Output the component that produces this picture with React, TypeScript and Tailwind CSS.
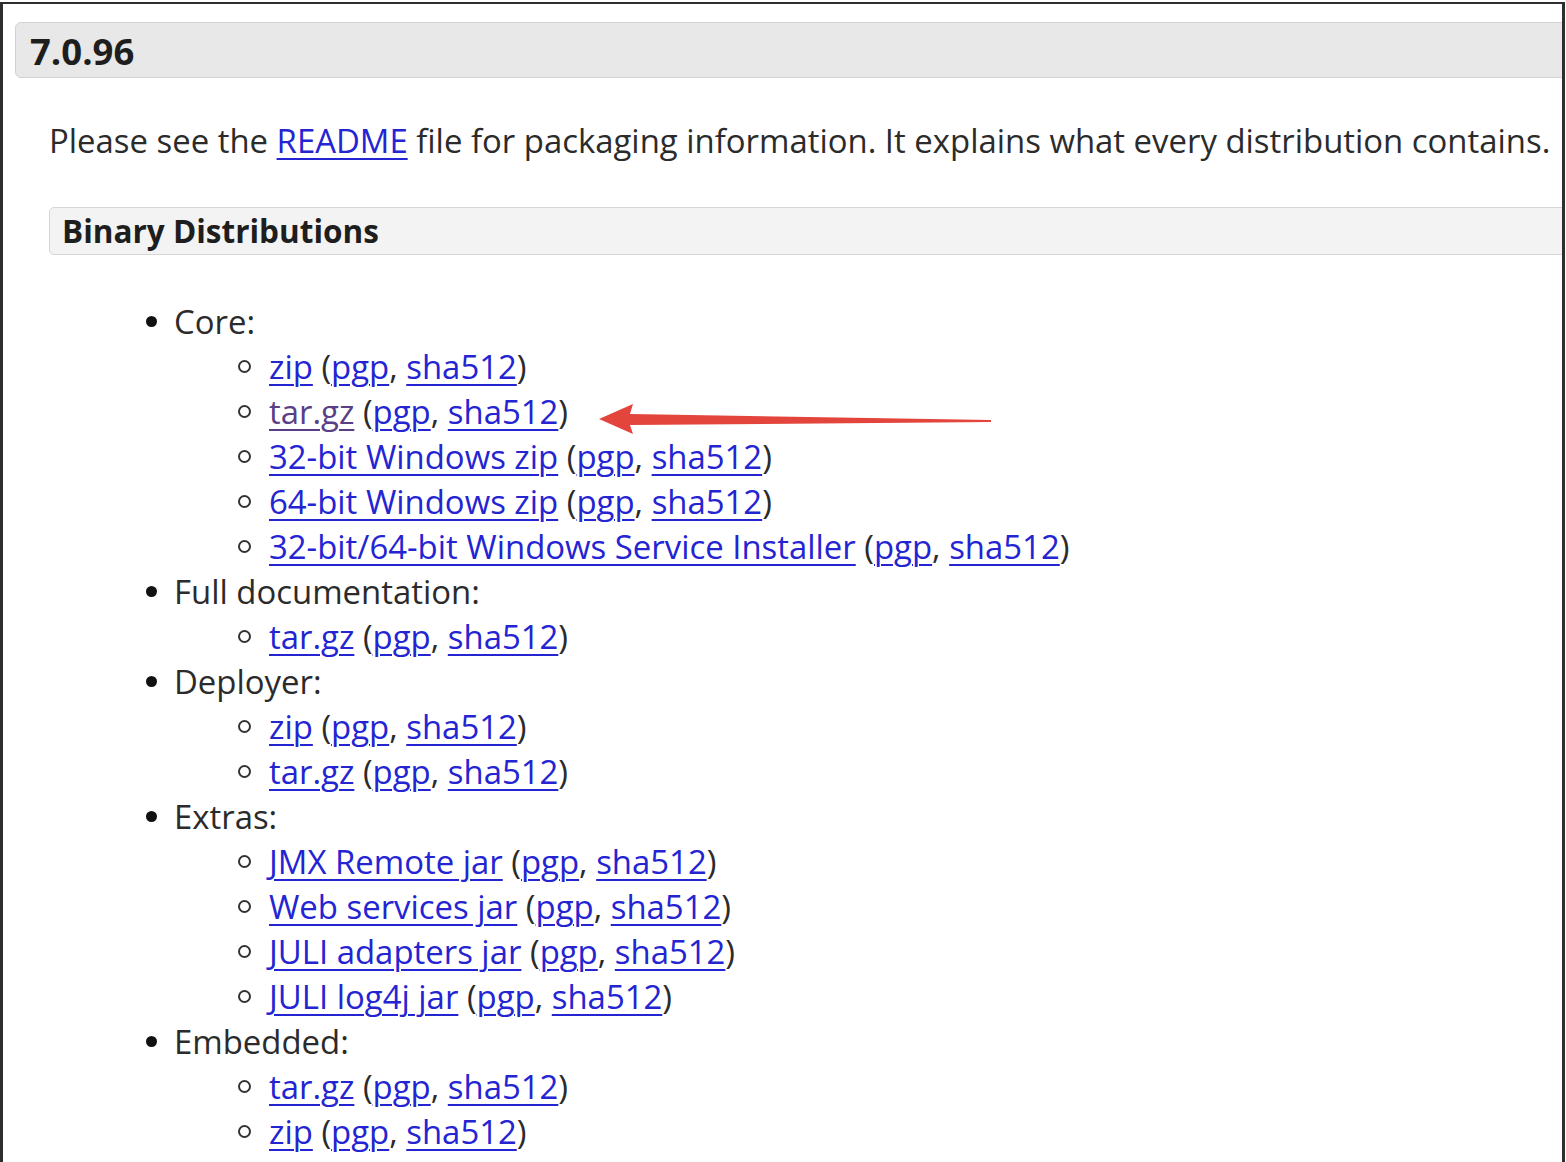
const link = "text-[#2424d2] underline decoration-[2px] underline-offset-[5px]";
const visited = "text-[#5a3f86] underline decoration-[2px] underline-offset-[5px]";

type Item = { label: string; visited?: boolean };
type Group = { title: string; items: Item[] };

const groups: Group[] = [
  {
    title: "Core:",
    items: [
      { label: "zip" },
      { label: "tar.gz", visited: true },
      { label: "32-bit Windows zip" },
      { label: "64-bit Windows zip" },
      { label: "32-bit/64-bit Windows Service Installer" },
    ],
  },
  { title: "Full documentation:", items: [{ label: "tar.gz" }] },
  { title: "Deployer:", items: [{ label: "zip" }, { label: "tar.gz" }] },
  {
    title: "Extras:",
    items: [
      { label: "JMX Remote jar" },
      { label: "Web services jar" },
      { label: "JULI adapters jar" },
      { label: "JULI log4j jar" },
    ],
  },
  { title: "Embedded:", items: [{ label: "tar.gz" }, { label: "zip" }] },
];

// red annotation arrow pointing at the core tar.gz row
function Arrow() {
  return (
    <svg
      className="absolute left-[590px] top-[393px]"
      width="410"
      height="44"
      viewBox="0 0 410 44"
    >
      <path
        d="M6 22 L40 7 L37 17 L398 23 L398 25 L37 28 L40 37 Z"
        fill="#e3453c"
      />
    </svg>
  );
}

export default function App() {
  return (
    <div
      className="h-[1162px] w-[1566px] overflow-hidden bg-white pt-[2px] text-[#2b2b2b]"
      style={{ fontFamily: '"Open Sans", "Liberation Sans", sans-serif' }}
    >
      <div className="relative h-[1200px] w-[1565px] overflow-hidden border-x-[3px] border-t-[2px] border-[#2e2e2e]">
        {/* version header */}
        <div className="ml-[12px] mt-[18px] flex h-[56px] w-[1600px] items-center rounded-[6px] border border-[#d2d2d2] bg-[#e8e8e8] pl-[14px] pt-[3px]">
          <h2 className="text-[36.5px] font-bold leading-none text-[#1e1e1e]">7.0.96</h2>
        </div>

        <div className="ml-[46px]">
          <p className="mt-[40px] text-[32.9px] leading-[45px]">
            Please see the <a className={link}>README</a> file for packaging information. It explains what every distribution contains.
          </p>

          {/* binary distributions */}
          <div className="mt-[44px] flex h-[48px] w-[1600px] items-center rounded-[5px] border border-[#d6d6d6] bg-[#f3f3f3] pl-[12px]">
            <h3 className="text-[31.5px] font-bold leading-none text-[#1e1e1e]">Binary Distributions</h3>
          </div>

          <ul className="mt-[44px] text-[32.9px] leading-[45px]">
            {groups.map((g) => (
              <li key={g.title}>
                <div className="flex items-center">
                  <span className="ml-[97px] mr-[17px] h-[11px] w-[11px] rounded-full bg-[#111]" />
                  <span>{g.title}</span>
                </div>
                <ul>
                  {g.items.map((it, i) => (
                    <li key={i} className="flex items-center">
                      <span className="ml-[189px] mr-[18px] h-[13px] w-[13px] rounded-full border-[2px] border-[#333]" />
                      <span>
                        <a className={it.visited ? visited : link}>{it.label}</a> (<a className={link}>pgp</a>, <a className={link}>sha512</a>)
                      </span>
                    </li>
                  ))}
                </ul>
              </li>
            ))}
          </ul>
        </div>

        <Arrow />
      </div>
    </div>
  );
}
